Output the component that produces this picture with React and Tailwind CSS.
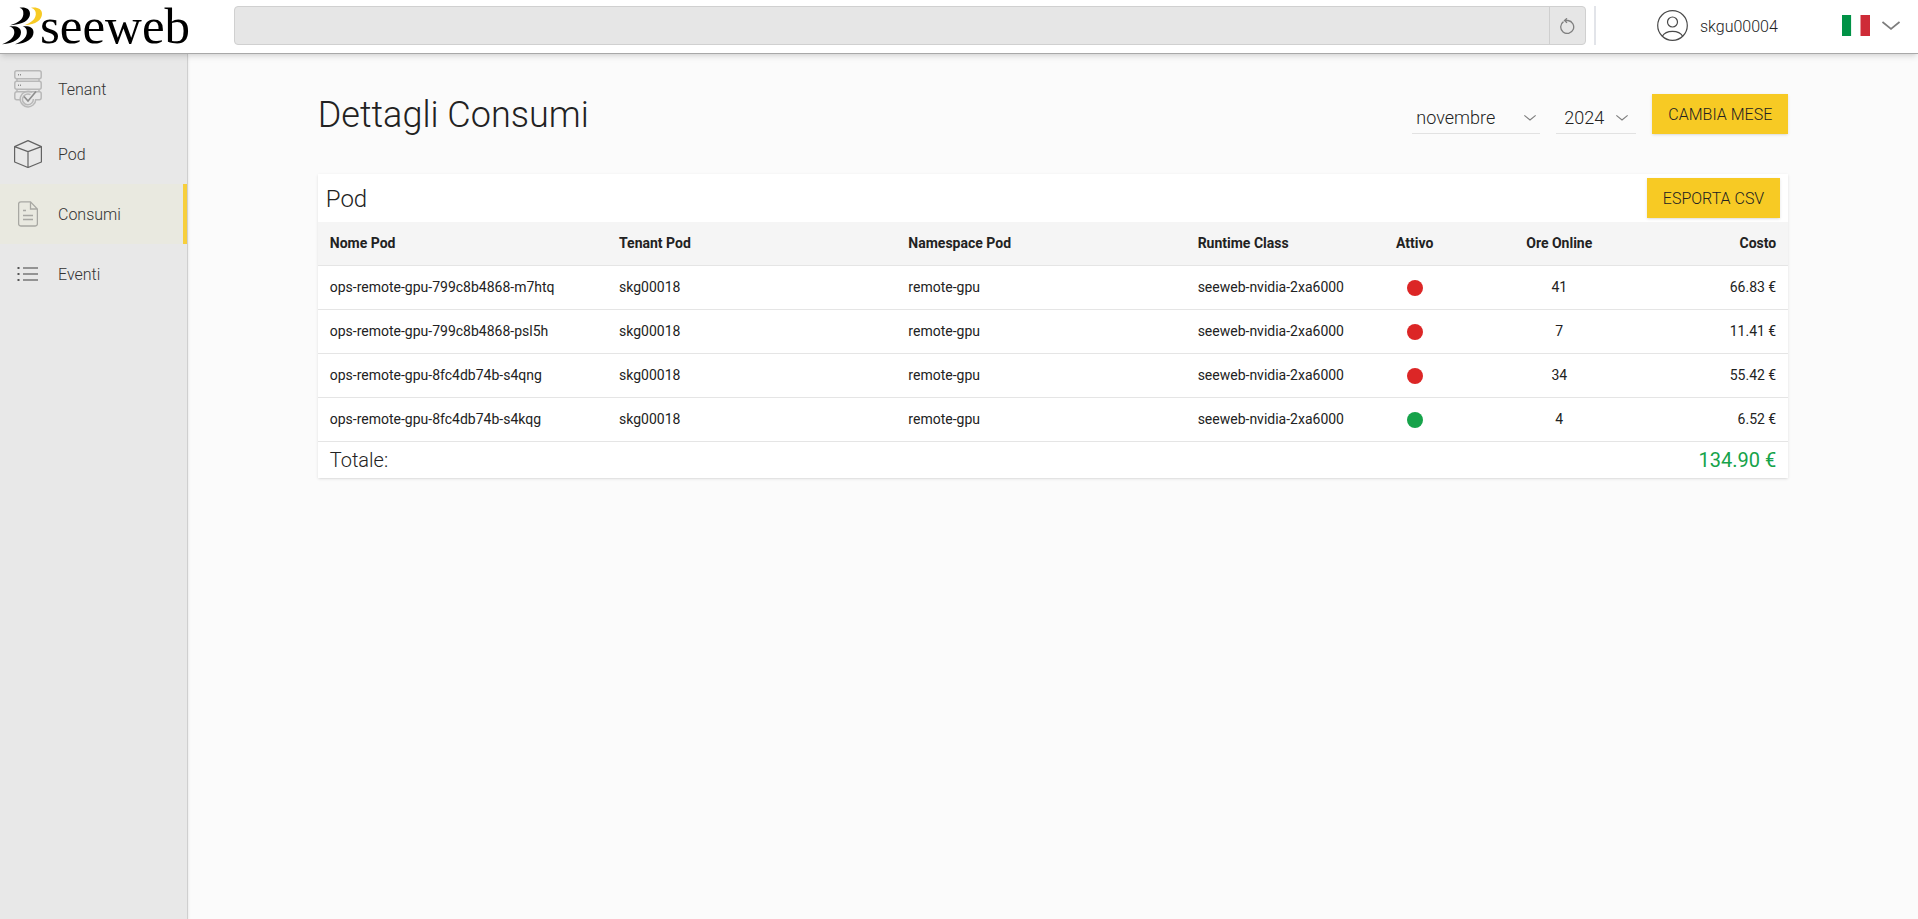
import React from "react";

const pods = [
  { name: "ops-remote-gpu-799c8b4868-m7htq", hours: 41, cost: "66.83 €", active: false },
  { name: "ops-remote-gpu-799c8b4868-psl5h", hours: 7, cost: "11.41 €", active: false },
  { name: "ops-remote-gpu-8fc4db74b-s4qng", hours: 34, cost: "55.42 €", active: false },
  { name: "ops-remote-gpu-8fc4db74b-s4kqg", hours: 4, cost: "6.52 €", active: true },
];

function LogoMark() {
  return (
    <svg viewBox="0 0 40 38" className="h-[38px] w-10 shrink-0 overflow-visible" aria-hidden="true">
      <path fill="#f7ca24" d="M31 .8C37 -.2 42 1.800 42 6.800C42 13 36 17.500 24.500 18.300C31 15.500 35.300 12.500 35.800 7.500C36 4 34.500 1.800 31 .8z" />
      <path fill="#000" d="M19.500 .8C25.500 -.2 30 1.800 30 6.800C30 13 23 17.800 10 18.300C18.500 15.500 22.800 12.500 23.300 7.500C23.500 4 23 1.800 19.500 .8z" />
      <path fill="#000" d="M9 19.600C16 18.600 21 20.300 21 25.300C21 31.500 14 36.500 2 37.300C9 34.500 13.800 31 14.300 26C14.500 22.500 13 20.400 9 19.600z" />
      <path fill="#000" d="M22.500 19.600C28.500 18.600 33.500 20.300 33.500 25.300C33.500 31.500 27 36.500 15 37.300C22 34.500 26.300 31 26.800 26C27 22.500 26 20.400 22.500 19.600z" />
    </svg>
  );
}

function TenantIcon() {
  return (
    <svg viewBox="0 0 28 38" className="h-[38px] w-7" fill="none" stroke="#b8b8b8" strokeWidth="1.500" aria-hidden="true">
      <rect x=".8" y=".8" width="26.400" height="8" rx="2" />
      <rect x=".8" y="11.300" width="26.400" height="8" rx="2" />
      <path d="M6.500 29.800H2.800a2 2 0 0 1-2-2v-4a2 2 0 0 1 2-2h22.400a2 2 0 0 1 2 2v4a2 2 0 0 1-2 2h-3.700" />
      <path d="M3 9v2.300M25 9v2.300M3 19.500v2.300M25 19.500v2.300" />
      <path d="M4 4.800h1M6 4.800h1M4 15.300h1M6 15.300h1" stroke="#8d8d8d" />
      <path d="M18 22.400A7.800 7.800 0 1 0 21.800 29M16.500 24.600a5.400 5.400 0 1 0 2.800 4.400" />
      <path d="M10 26.500l4 4.500l8-9.500" stroke="#8d8d8d" strokeWidth="1.600" />
    </svg>
  );
}

function PodIcon() {
  return (
    <svg viewBox="0 0 28 28" className="size-7" fill="none" stroke="#636363" strokeWidth="1.200" strokeLinejoin="round" aria-hidden="true">
      <path d="M14 .6L27.400 6.600V22L14 27.500L.6 22V6.600zM.6 6.600L14 11.600L27.400 6.600M14 11.600V27.500" />
    </svg>
  );
}

function ConsumiIcon() {
  return (
    <svg viewBox="0 0 20 26" className="h-[26px] w-5" fill="none" stroke="#a8a8a3" strokeWidth="1.300" aria-hidden="true">
      <path d="M12.500 .8H2.800a2.200 2.200 0 0 0-2.200 2.200v19.800a2.200 2.200 0 0 0 2.200 2.200h14.400a2.200 2.200 0 0 0 2.200-2.200V8zV8h6.900M5 9.500h3M5 14.500h10M5 18.500h10" />
    </svg>
  );
}

function EventiIcon() {
  return (
    <svg viewBox="0 0 22 16" className="h-4 w-[22px]" stroke="#777" strokeWidth="1.300" aria-hidden="true">
      <path d="M6 2h15M6 8h15M6 14h15" />
      <path d="M.5 2h2M.5 8h2M.5 14h2" stroke="#555" strokeWidth="2" />
    </svg>
  );
}

function Chevron({ className }) {
  return (
    <svg viewBox="0 0 18 10" className={className} fill="none" stroke="#7d7d7d" strokeWidth="1.700" aria-hidden="true">
      <path d="M.5 1L9 8L17.500 1" />
    </svg>
  );
}

const nav = [
  { label: "Tenant", icon: TenantIcon, height: "h-[70px]" },
  { label: "Pod", icon: PodIcon, height: "h-[60px]" },
  { label: "Consumi", icon: ConsumiIcon, height: "h-[60px]", current: true },
  { label: "Eventi", icon: EventiIcon, height: "h-[60px]" },
];

function Header() {
  return (
    <header className="relative z-10 flex h-[54px] items-center border-b border-[#a8a8a8] bg-white pb-0.5 shadow-md">
      <a href="#" aria-label="seeweb" className="flex w-[234px] shrink-0 items-center text-black">
        <LogoMark />
        <span className="font-['Liberation_Serif',serif] text-[51px] leading-[52px]">seeweb</span>
      </a>
      <div className="flex h-[39px] flex-1 overflow-hidden rounded-[4px] border border-[#d0d0d0] bg-[#e6e6e6]">
        <input type="text" aria-label="Cerca" className="min-w-0 flex-1 bg-transparent px-3 text-base outline-none" />
        <button type="button" aria-label="Aggiorna" className="flex w-9 items-center justify-center border-l border-[#cfcfcf]">
          <svg viewBox="0 0 16 16" className="size-4" fill="none" stroke="#808080" strokeWidth="1.300" aria-hidden="true">
            <path d="M3.500 3.600A6.500 6.500 0 1 0 8 2.500H4.500M7 .3L4.500 2.500L7 4.900" />
          </svg>
        </button>
      </div>
      <div className="ml-2 h-[39px] w-0.5 bg-[#e2e4e9]" />
      <div className="flex w-[322px] shrink-0 items-center">
        <a href="#" className="ml-[61px] flex items-center gap-3">
          <svg viewBox="0 0 31 31" className="size-[31px]" fill="none" stroke="#4a4a4a" strokeWidth="1.200" aria-hidden="true">
            <circle cx="15.500" cy="15.500" r="14.800" />
            <circle cx="15.500" cy="12" r="5" />
            <path d="M5.300 26.200C7 23.200 11 21.300 15.500 21.300S24 23.200 25.700 26.200" />
          </svg>
          <span className="pt-0.5 text-base">skgu00004</span>
        </a>
        <button type="button" aria-label="Lingua: italiano" className="mr-[18px] ml-auto flex items-center gap-3">
          <svg viewBox="0 0 28 21" className="h-[21px] w-7" aria-hidden="true">
            <path fill="#009246" d="M0 0h9.300v21H0z" />
            <path fill="#fff" d="M9.300 0h9.400v21H9.300z" />
            <path fill="#ce2b37" d="M18.500 0H28v21h-9.500z" />
          </svg>
          <Chevron className="h-2.5 w-[18px]" />
        </button>
      </div>
    </header>
  );
}

function Sidebar() {
  return (
    <nav className="w-[188px] shrink-0 border-r border-[#cfcfcf] bg-[#e8e8e8] shadow-sm">
      {nav.map(({ label, icon: Icon, height, current }) => (
        <a
          key={label}
          href="#"
          aria-current={current ? "page" : undefined}
          className={`flex items-center text-base text-[#333] ${height} ${current ? "border-r-4 border-[#f7cf3c] bg-[#e9e9e0]" : ""}`}
        >
          <span className="flex w-14 justify-center">
            <Icon />
          </span>
          <span className="pt-0.5 pl-0.5">{label}</span>
        </a>
      ))}
    </nav>
  );
}

function Select({ label, value, options, className, chevronClassName }) {
  return (
    <div className={`relative h-8 border-b border-[#e2e2e2] ${className}`}>
      <select aria-label={label} defaultValue={value} className="h-8 w-full appearance-none bg-transparent text-lg leading-8 outline-none">
        {options.map((o) => (
          <option key={o}>{o}</option>
        ))}
      </select>
      <Chevron className={`pointer-events-none absolute top-3 h-2 w-3 ${chevronClassName}`} />
    </div>
  );
}

const yellowButton = "h-10 bg-[#f7ca24] px-4 pt-0.5 text-base uppercase shadow-sm";

function PodTable() {
  const row = "grid h-11 grid-cols-10 items-center border-b border-[#e5e5e5] px-3 pb-0.5";
  return (
    <table className="block w-full text-sm font-normal">
      <thead className="block">
        <tr className={`${row} bg-[#f5f5f5] text-left`}>
          <th className="col-span-2">Nome Pod</th>
          <th className="col-span-2">Tenant Pod</th>
          <th className="col-span-2">Namespace Pod</th>
          <th className="whitespace-nowrap">Runtime Class</th>
          <th className="text-center">Attivo</th>
          <th className="text-center">Ore Online</th>
          <th className="text-right">Costo</th>
        </tr>
      </thead>
      <tbody className="block">
        {pods.map((p) => (
          <tr key={p.name} className={row}>
            <td className="col-span-2">{p.name}</td>
            <td className="col-span-2">skg00018</td>
            <td className="col-span-2">remote-gpu</td>
            <td className="whitespace-nowrap">seeweb-nvidia-2xa6000</td>
            <td className="flex justify-center pt-0.5">
              <span
                role="img"
                aria-label={p.active ? "attivo" : "non attivo"}
                className={`size-4 rounded-full ${p.active ? "bg-[#16a34a]" : "bg-[#dc2626]"}`}
              />
            </td>
            <td className="text-center">{p.hours}</td>
            <td className="text-right">{p.cost}</td>
          </tr>
        ))}
      </tbody>
      <tfoot className="block">
        <tr className="flex h-9 items-center justify-between px-3 text-xl">
          <th scope="row" className="font-light">Totale:</th>
          <td className="text-[#16a34a]">134.90 €</td>
        </tr>
      </tfoot>
    </table>
  );
}

export default function App() {
  return (
    <div className="flex min-h-screen flex-col bg-[#fbfbfb] font-['Roboto',sans-serif] font-light text-[#222]">
      <Header />
      <div className="flex flex-1">
        <Sidebar />
        <main className="min-w-0 flex-1">
          <div className="mx-auto w-[85%] pt-10">
            <div className="flex h-10 items-center">
              <h1 className="pt-0.5 text-4xl">Dettagli Consumi</h1>
              <div className="ml-auto flex items-end gap-4">
                <Select
                  label="Mese"
                  value="novembre"
                  options={["gennaio", "febbraio", "marzo", "aprile", "maggio", "giugno", "luglio", "agosto", "settembre", "ottobre", "novembre", "dicembre"]}
                  className="w-32 *:[select]:pl-1"
                  chevronClassName="right-1"
                />
                <Select
                  label="Anno"
                  value="2024"
                  options={["2023", "2024"]}
                  className="w-20 *:[select]:pl-2"
                  chevronClassName="right-2"
                />
                <button type="button" className={yellowButton}>Cambia mese</button>
              </div>
            </div>
            <section className="mt-10 bg-white shadow-sm">
              <div className="flex h-12 items-center justify-between px-2">
                <h2 className="pt-0.5 text-2xl">Pod</h2>
                <button type="button" className={yellowButton}>Esporta CSV</button>
              </div>
              <PodTable />
            </section>
          </div>
        </main>
      </div>
    </div>
  );
}
